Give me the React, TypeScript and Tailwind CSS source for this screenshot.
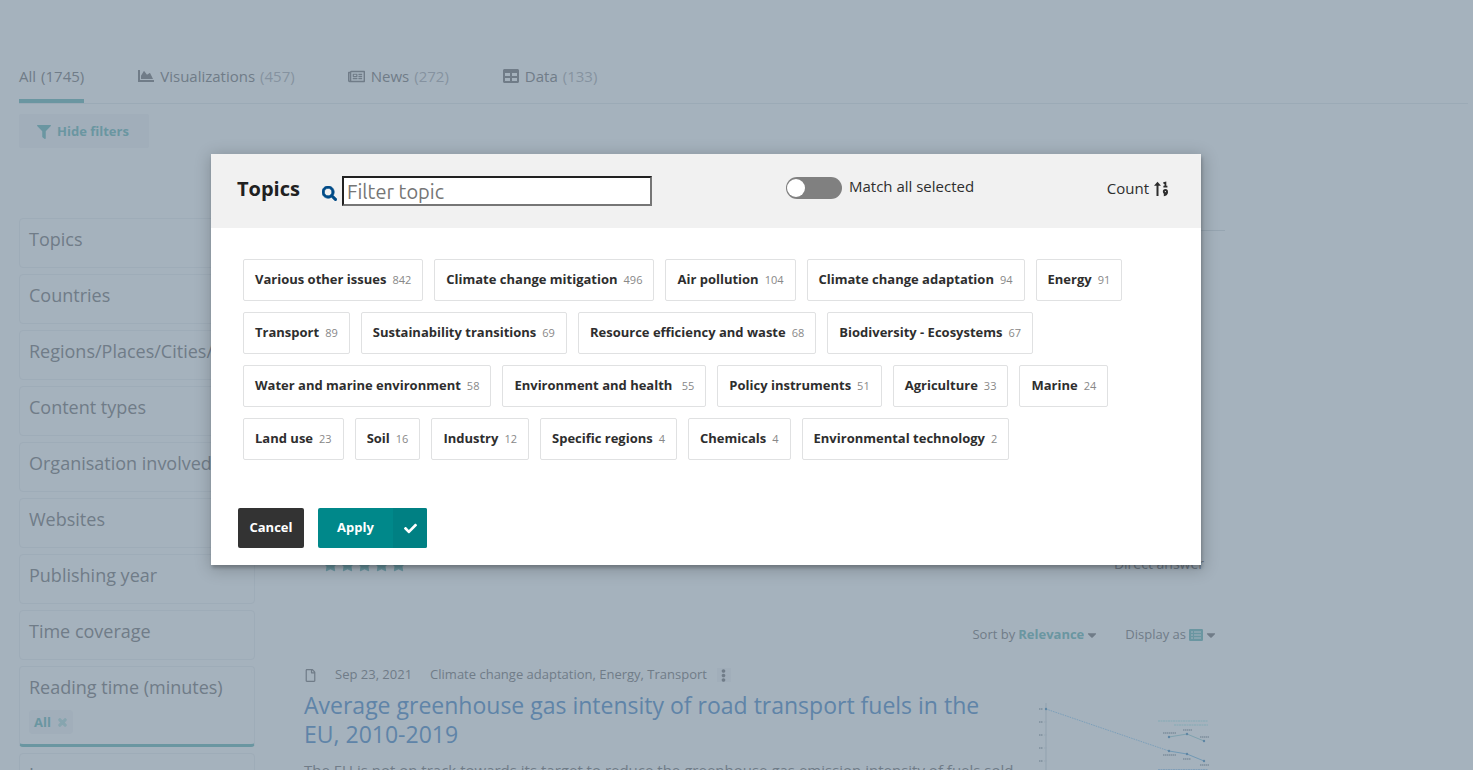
import { useState } from "react";
import {
  FaCaretDown,
  FaChartArea,
  FaCheck,
  FaEllipsisV,
  FaFilter,
  FaRegFile,
  FaRegNewspaper,
  FaSearch,
  FaStar,
  FaTable,
  FaTimes,
} from "react-icons/fa";

const TABS = [
  { label: "All", count: 1745, icon: null },
  { label: "Visualizations", count: 457, icon: <FaChartArea size={16} /> },
  { label: "News", count: 272, icon: <FaRegNewspaper size={17} /> },
  { label: "Data", count: 133, icon: <FaTable size={16} /> },
];

const FACETS = [
  "Topics",
  "Countries",
  "Regions/Places/Cities/Seas",
  "Content types",
  "Organisation involved",
  "Websites",
  "Publishing year",
  "Time coverage",
  "Reading time (minutes)",
  "Language",
];

const TOPICS: [string, number][] = [
  ["Various other issues", 842],
  ["Climate change mitigation", 496],
  ["Air pollution", 104],
  ["Climate change adaptation", 94],
  ["Energy", 91],
  ["Transport", 89],
  ["Sustainability transitions", 69],
  ["Resource efficiency and waste", 68],
  ["Biodiversity - Ecosystems", 67],
  ["Water and marine environment", 58],
  ["Environment and health ", 55],
  ["Policy instruments", 51],
  ["Agriculture", 33],
  ["Marine", 24],
  ["Land use", 23],
  ["Soil", 16],
  ["Industry", 12],
  ["Specific regions", 4],
  ["Chemicals", 4],
  ["Environmental technology", 2],
];

function SortNumericIcon() {
  return (
    <svg width="14" height="16" viewBox="0 0 14 16" aria-hidden="true">
      <path d="M3.5.8 7 4.8H4.5V15h-2V4.8H0Z" fill="currentColor" />
      <path d="M9.4 2.2 11.4 1.6V5.4M9.4 5.6h4" fill="none" stroke="currentColor" strokeWidth="1.8" />
      <circle cx="11.4" cy="10.6" r="1.6" fill="none" stroke="currentColor" strokeWidth="1.9" />
      <path d="M13 10.8c0 2.2-1 3.3-3.2 3.4" fill="none" stroke="currentColor" strokeWidth="1.9" />
    </svg>
  );
}

function ListViewIcon() {
  return (
    <svg width="14" height="12" viewBox="0 0 14 12" aria-hidden="true">
      <rect width="14" height="12" rx="1.2" fill="#6a96a1" />
      <path d="M2 3h2M5 3h7M2 6h2M5 6h7M2 9h2M5 9h7" stroke="#a5b2bd" strokeWidth="1" />
    </svg>
  );
}

function Thumbnail() {
  return (
    <svg width="180" height="100" viewBox="0 0 180 100" role="img" aria-label="Greenhouse gas intensity chart">
      <path d="M10 0V100" stroke="#98a7b4" strokeWidth="1.4" />
      <path d="M8 19h3M8 32h3M8 45h3M8 58h3" stroke="#98a7b4" />
      <path d="M10 6 133 48" stroke="#7b9fba" strokeWidth="1" strokeDasharray="1.5 1" fill="none" />
      <path d="M133 48 151 51 168 58" stroke="#7199b5" fill="none" />
      <path d="M133 34 151 31 168 38" stroke="#7fa2af" fill="none" />
      <g fill="#5f86a3">
        <circle cx="10" cy="6" r="1.2" />
        <circle cx="133" cy="48" r="1.2" />
        <circle cx="151" cy="51" r="1.2" />
        <circle cx="168" cy="58" r="1.2" />
        <circle cx="133" cy="34" r="1.2" />
        <circle cx="151" cy="31" r="1.2" />
        <circle cx="168" cy="38" r="1.2" />
      </g>
      <path
        d="M3 6h4M3 19h4M3 32h4M3 45h4M3 58h4M127 30h13M147 27h9M164 34h9M127 52h13M147 56h8M164 62h9"
        stroke="#8797a4"
        strokeWidth="2"
        strokeDasharray="1.5 .5"
      />
      <path d="M122 18h50M138 22h34" stroke="#94aeb9" strokeWidth="2" strokeDasharray="2 .5" />
      <path d="M122 67h50" stroke="#819fb8" strokeWidth="2" strokeDasharray="2 .5" />
    </svg>
  );
}

function ResultsPage() {
  return (
    <div className="h-full overflow-hidden pl-[19px] text-[#707c88]">
      <nav className="mr-[5px] flex gap-[53px] border-b border-[#9baab6] pt-[60px] text-[15px]">
        {TABS.map((tab, i) => (
          <a
            key={tab.label}
            href={"#" + tab.label.toLowerCase()}
            className={
              i === 0
                ? "flex h-[43px] items-start gap-[5px] border-b-4 border-[#6a96a1] pt-1.5 leading-[21px]"
                : "flex h-[43px] items-start gap-[5px] pt-1.5 leading-[21px]"
            }
          >
            {tab.icon && <span className="flex h-5 w-[18px] items-center justify-center">{tab.icon}</span>}
            <span>{tab.label}</span>
            <span className={i === 0 ? "" : "text-[#8592a0]"}>({tab.count})</span>
          </a>
        ))}
      </nav>

      <button className="mt-2.5 flex h-[34px] w-[130px] items-center gap-1.5 rounded-xs bg-[#a1aeba] pt-px pl-[18px] text-[13px] font-bold text-[#6a96a1]">
        <FaFilter size={14} />
        Hide filters
      </button>

      <div className="flex gap-[49px]">
        <aside className="flex w-[236px] shrink-0 flex-col gap-1.5 pt-[70px]">
          {FACETS.map((facet) =>
            facet.startsWith("Reading") ? (
              <section key={facet} className="h-[81px] rounded border border-b-3 border-[#9eacb8] border-b-[#6a96a1] px-[9px] pt-2">
                <h3 className="text-lg leading-6">{facet}</h3>
                <button className="mt-[11px] flex h-6 items-center gap-1.5 rounded bg-[#a1aeba] px-[5px] pt-px text-[13px] font-bold text-[#6a96a1]">
                  All
                  <FaTimes size={11} strokeWidth={50} className="text-[#87a5af]" />
                </button>
              </section>
            ) : (
              <section key={facet} className="h-[50px] shrink-0 overflow-hidden rounded border border-[#9eacb8] px-[9px] pt-2">
                <h3 className="text-lg leading-6 whitespace-nowrap">{facet}</h3>
              </section>
            ),
          )}
        </aside>

        <main className="w-[921px] shrink-0 pt-[82px]">
          <hr className="border-[#96a5b1]" />
          <div className="mt-[323px] flex h-5 items-center">
            <div className="flex w-[122px] gap-0.5 pl-[19px] text-[#6a96a1]">
              {[1, 2, 3, 4, 5].map((n) => (
                <FaStar key={n} size={15} />
              ))}
            </div>
            <hr className="grow border-[#96a5b1]" />
            <span className="mr-[21px] ml-[18px] text-sm leading-5">Direct answer</span>
          </div>

          <div className="mt-[51px] flex h-5 items-center justify-end pr-[7px] text-[13px]">
            <label className="flex items-center gap-[3px]">
              Sort by
              <span className="flex items-center">
                <select className="field-sizing-content appearance-none font-bold text-[#6a96a1]">
                  <option>Relevance</option>
                </select>
                <FaCaretDown size={14} className="ml-px" />
              </span>
            </label>
            <button className="ml-[26px] flex items-center gap-[3px]">
              Display as
              <span className="flex items-center">
                <ListViewIcon />
                <FaCaretDown size={14} className="ml-px" />
              </span>
            </button>
          </div>

          <article className="mt-5 flex">
            <div className="w-[710px] shrink-0">
              <div className="flex h-5 items-center text-[13px]">
                <FaRegFile size={13} />
                <span className="ml-[18px]">Sep 23, 2021</span>
                <span className="ml-[18px]">Climate change adaptation, Energy, Transport</span>
                <button aria-label="More" className="ml-2.5 flex h-3.5 w-3.5 items-center justify-center bg-[#a1aeba]">
                  <FaEllipsisV size={13} />
                </button>
              </div>
              <h2 className="mt-1.5 text-[23px] leading-[29px] text-[#5f84a8]">
                <a href="#result">Average greenhouse gas intensity of road transport fuels in the EU, 2010-2019</a>
              </h2>
              <p className="mt-[11px] text-[15px] leading-[21px]">
                The EU is not on track towards its target to reduce the greenhouse gas emission intensity of fuels sold
              </p>
            </div>
            <div className="ml-[22px] pt-[38px]">
              <Thumbnail />
            </div>
          </article>
        </main>
      </div>
    </div>
  );
}

function TopicsDialog() {
  const [query, setQuery] = useState("");
  const visible = TOPICS.filter(([name]) => name.toLowerCase().includes(query.toLowerCase()));
  return (
    <div
      role="dialog"
      aria-labelledby="dialog-title"
      className="w-[990px] bg-white text-[#2e2e2e] shadow-[1px_3px_3px_0_rgba(0,0,0,0.2),1px_3px_15px_2px_rgba(0,0,0,0.2)]"
    >
      <header className="flex h-[74px] items-start bg-[#f1f1f1] pr-[33px] pl-[26px]">
        <h1 id="dialog-title" className="mt-5 text-xl leading-[30px] font-bold text-[#212121]">
          Topics
        </h1>
        <label htmlFor="topic-filter" aria-label="Filter topic" className="mt-8 ml-[22px] text-[#004b87]">
          <FaSearch size={15} strokeWidth={24} />
        </label>
        <input
          id="topic-filter"
          value={query}
          onChange={(e) => setQuery(e.target.value)}
          placeholder="Filter topic"
          className="mt-[22px] ml-[5px] h-[30px] w-[310px] border-2 border-t-[#212121] border-r-[#767676] border-b-[#767676] border-l-[#212121] bg-white px-[3px] font-[Ubuntu,'Noto_Sans',sans-serif] text-xl leading-6 placeholder:text-[#757575]"
        />
        <label className="mt-[22px] ml-[134px] flex items-start gap-[7px] text-[15px] leading-[21px]">
          <input
            type="checkbox"
            role="switch"
            className="mt-px flex h-[22px] w-14 appearance-none items-center rounded-full bg-[#808080] px-px before:size-[18px] before:rounded-full before:bg-white checked:justify-end checked:bg-[#007b6c]"
          />
          Match all selected
        </label>
        <button className="mt-6 ml-auto flex items-center gap-[5px] text-[15px] leading-[21px]">
          Count
          <SortNumericIcon />
        </button>
      </header>

      <div className="flex flex-wrap gap-[11px] px-8 pt-[31px]">
        {visible.map(([name, count]) => (
          <button
            key={name}
            className="flex h-[42px] items-center gap-1.5 rounded-xs border border-[#e0e1e2] px-[11px] text-[13px] font-bold whitespace-pre"
          >
            {name}
            <span className="text-[11px] font-normal text-[#888888]">{count}</span>
          </button>
        ))}
      </div>

      <footer className="mt-12 flex gap-3.5 pb-[17px] pl-[27px] text-[13px] font-bold text-white">
        <button className="h-10 w-[66px] rounded-xs bg-[#333333]">Cancel</button>
        <button className="flex h-10 w-[109px] overflow-hidden rounded-xs bg-[#00888a]">
          <span className="flex h-full grow items-center justify-center">Apply</span>
          <span className="flex h-full w-[34px] items-center justify-center bg-[#008083]">
            <FaCheck size={13} />
          </span>
        </button>
      </footer>
    </div>
  );
}

export default function App() {
  return (
    <div className="relative h-screen overflow-hidden bg-[#a5b2bd] font-['Open_Sans','Noto_Sans',sans-serif]">
      <ResultsPage />
      <div className="absolute inset-0 flex items-start justify-center pt-[154px] pr-[61px]">
        <TopicsDialog />
      </div>
    </div>
  );
}
